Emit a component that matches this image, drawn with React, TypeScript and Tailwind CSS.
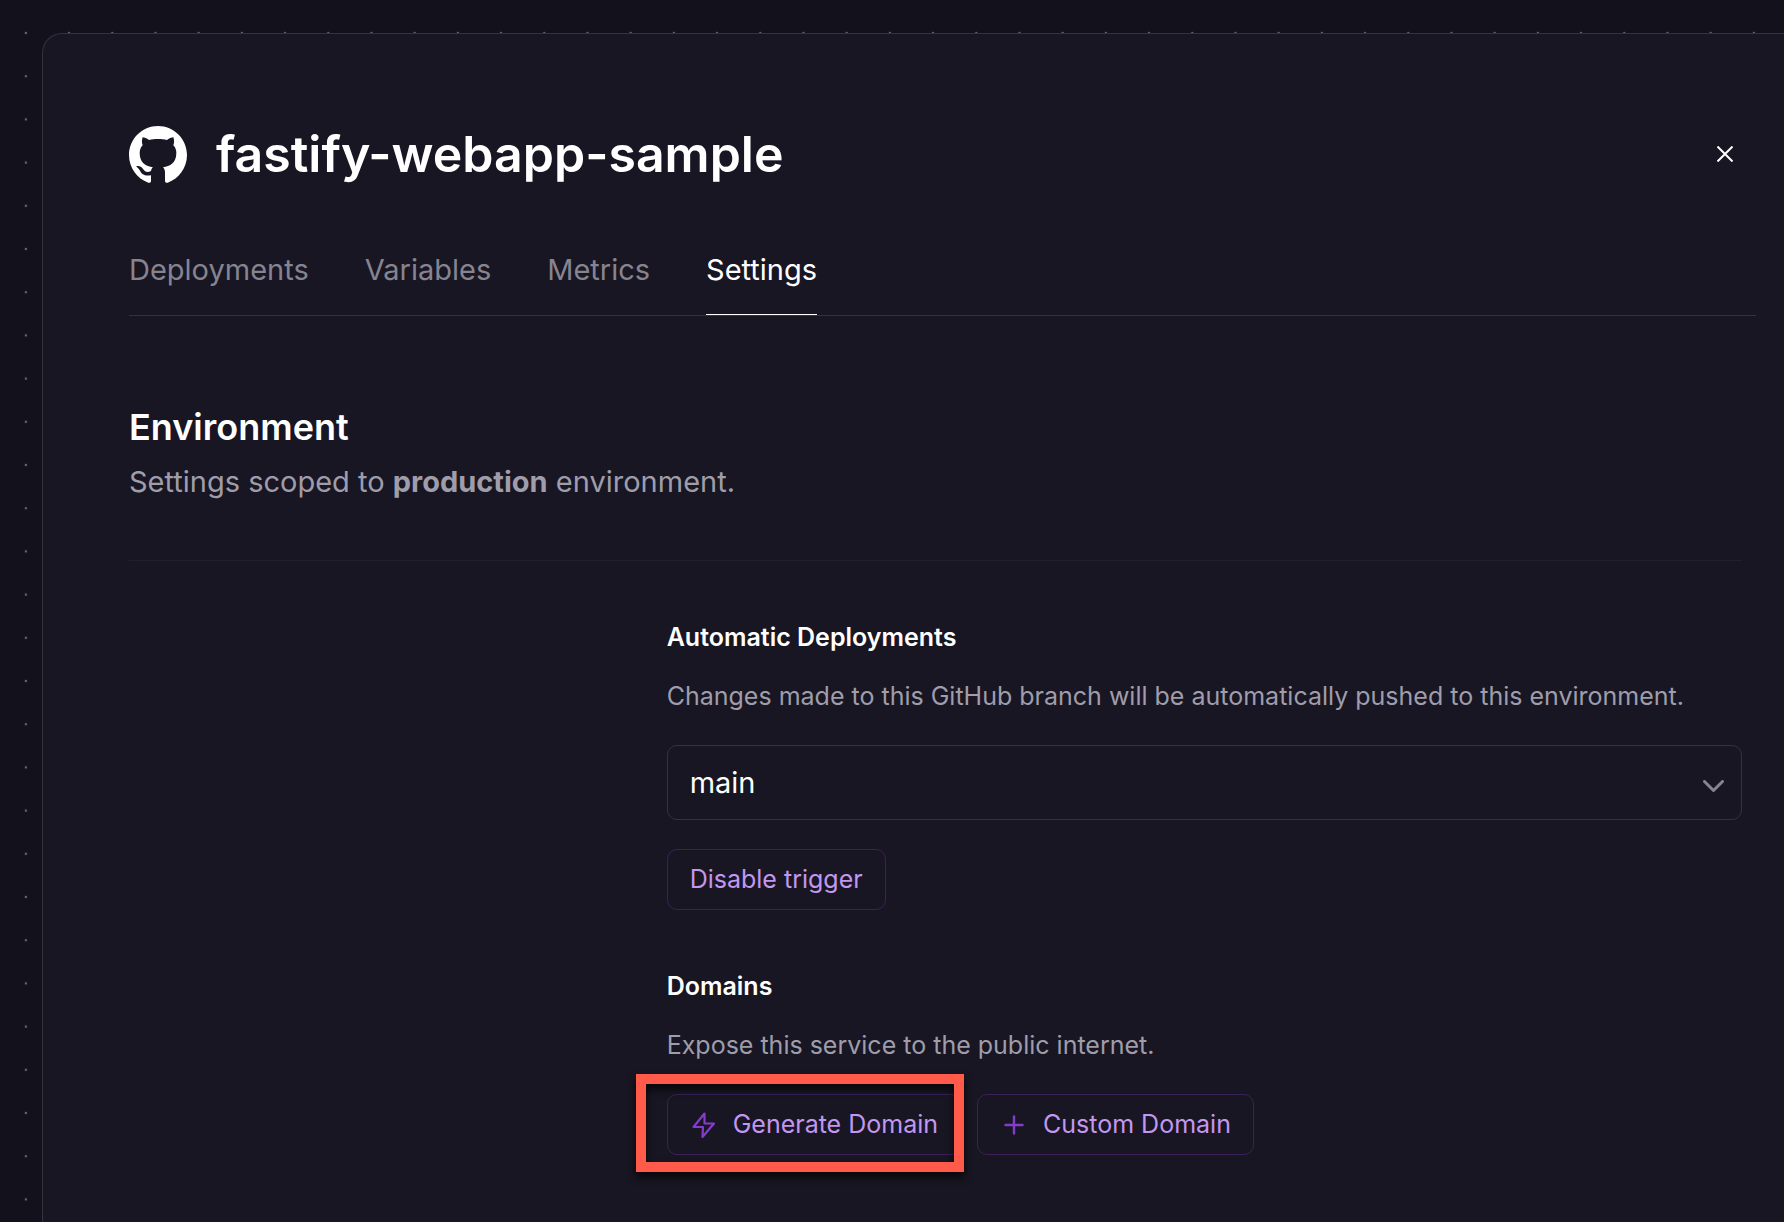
import type { ReactNode } from "react";

const tabs = ["Deployments", "Variables", "Metrics", "Settings"];

function GithubMark() {
  return (
    <svg className="h-[57px] w-[58px] shrink-0" viewBox="0 0 174 171" fill="currentColor" aria-hidden="true">
      <path d="M87 0C39 0 0 39 0 87c0 38 24 71 58 83 5 1 8-1 8-5v-17c-20 3-27-3-32-12-3-6-6-9-10-12-4-4 0-5 4-4 8 1 12 6 16 11 6 8 13 8 22 4 1-5 3-9 6-11-21-3-40-13-40-43 0-9 3-17 9-23-3-8-3-15 0-24 5 0 12 3 19 8 16-4 38-4 54 0 7-5 14-8 19-8 3 9 3 16 0 24 6 6 9 14 9 23 0 30-19 40-40 43 4 4 6 9 6 17v24c0 4 3 6 8 5 34-12 58-45 58-83C174 39 135 0 87 0z" />
    </svg>
  );
}

function DotGrid() {
  return (
    <svg className="pointer-events-none absolute inset-0 h-full w-full" aria-hidden="true">
      <defs>
        <pattern id="dots" x="4.3" y="11.4" width="43.2" height="43.2" patternUnits="userSpaceOnUse">
          <circle cx="21.6" cy="21.6" r="1.2" fill="#676573" />
        </pattern>
      </defs>
      <rect width="100%" height="100%" fill="url(#dots)" />
    </svg>
  );
}

function OutlineButton({ icon, children }: { icon?: ReactNode; children: ReactNode }) {
  return (
    <button
      type="button"
      className="flex h-[61px] items-center gap-[15px] whitespace-nowrap rounded-[10px] border border-[#3c2159] px-[22px] text-[25px] text-[#c297f0]"
    >
      {icon}
      {children}
    </button>
  );
}

function Field({ title, hint, children }: { title: string; hint: string; children: ReactNode }) {
  return (
    <section>
      <h3 className="text-[25px] font-semibold leading-9 text-white">{title}</h3>
      <p className="mt-[23px] whitespace-nowrap text-[25px] leading-9 text-[#9f9dab]">{hint}</p>
      {children}
    </section>
  );
}

export default function App() {
  return (
    <div className="relative flex min-h-screen flex-col overflow-hidden bg-[#13111c] pl-[42px] pt-[33px] font-['Inter',sans-serif]">
      <DotGrid />
      <main className="relative grow rounded-tl-[20px] border-l border-t border-[#33323e] bg-[#181622] pb-12 pl-[86px] pr-7">
        <header className="mt-[91px] flex items-center">
          <span className="text-white">
            <GithubMark />
          </span>
          <h1 className="ml-[29px] grow text-[50px] font-semibold leading-[58px] text-white">fastify-webapp-sample</h1>
          <button type="button" aria-label="Close" className="mr-[11px] flex h-10 w-10 items-center justify-center text-white">
            <svg className="h-4 w-4" viewBox="0 0 16 16" fill="none" stroke="currentColor" strokeWidth="2" aria-hidden="true">
              <path d="M0.5 0.5l15 15M15.5 0.5l-15 15" />
            </svg>
          </button>
        </header>

        <nav className="mt-16 flex gap-14 border-b border-[#33323e]" aria-label="Service">
          {tabs.map((tab) => (
            <a
              key={tab}
              href={"#" + tab.toLowerCase()}
              aria-current={tab === "Settings" ? "page" : undefined}
              className={
                tab === "Settings"
                  ? "border-b border-white pb-[21px] text-[29px] leading-[46px] text-white"
                  : "border-b border-transparent pb-[21px] text-[29px] leading-[46px] text-[#868491]"
              }
            >
              {tab}
            </a>
          ))}
        </nav>

        <div className="mr-[14px]">
          <div className="mt-[89px] border-b border-[#211f2b] pb-[57px]">
            <h2 className="text-[36px] font-semibold leading-[44px] text-white">Environment</h2>
            <p className="mt-3 text-[29px] leading-[42px] text-[#9f9dab]">
              Settings scoped to <strong className="font-bold">production</strong> environment.
            </p>
          </div>

          <div className="mt-[58px] grid grid-cols-3">
            <div className="col-span-2 col-start-2 flex flex-col gap-[58px]">
              <Field title="Automatic Deployments" hint="Changes made to this GitHub branch will be automatically pushed to this environment.">
                <div className="relative mt-[31px]">
                  <select
                    aria-label="Branch"
                    className="block h-[75px] w-full appearance-none rounded-[10px] border border-[#33323e] bg-transparent px-[22px] text-[29px] text-white"
                  >
                    <option>main</option>
                  </select>
                  <svg
                    className="pointer-events-none absolute right-[18px] top-[35px] h-3 w-[21px] text-[#868491]"
                    viewBox="0 0 21 12"
                    fill="none"
                    stroke="currentColor"
                    strokeWidth="3"
                    strokeLinecap="round"
                    strokeLinejoin="round"
                    aria-hidden="true"
                  >
                    <path d="M1.5 1.5l9 9 9-9" />
                  </svg>
                </div>
                <div className="mt-[29px] flex">
                  <OutlineButton>Disable trigger</OutlineButton>
                </div>
              </Field>

              <Field title="Domains" hint="Expose this service to the public internet.">
                <div className="mt-[31px] flex gap-4">
                  <div className="relative">
                    <OutlineButton
                      icon={
                        <svg className="h-7 w-7 text-[#853bce]" viewBox="0 0 28 28" fill="none" stroke="currentColor" strokeWidth="2.2" strokeLinejoin="round" aria-hidden="true">
                          <path d="M14.5 2.5L3.5 16h9.5l-.5 10L24 12.500h-9.500z" />
                        </svg>
                      }
                    >
                      Generate Domain
                    </OutlineButton>
                    <div className="pointer-events-none absolute -bottom-[17px] -left-[31px] -right-[3px] -top-5 border-[10px] border-[#ff5a4a] drop-shadow-[0_5px_4px_rgba(0,0,0,0.8)]" />
                  </div>
                  <OutlineButton
                    icon={
                      <svg className="h-7 w-7 text-[#853bce]" viewBox="0 0 28 28" fill="none" stroke="currentColor" strokeWidth="2.4" strokeLinecap="round" aria-hidden="true">
                        <path d="M14 5.500v17M5.500 14h17" />
                      </svg>
                    }
                  >
                    Custom Domain
                  </OutlineButton>
                </div>
              </Field>
            </div>
          </div>
        </div>
      </main>
    </div>
  );
}
